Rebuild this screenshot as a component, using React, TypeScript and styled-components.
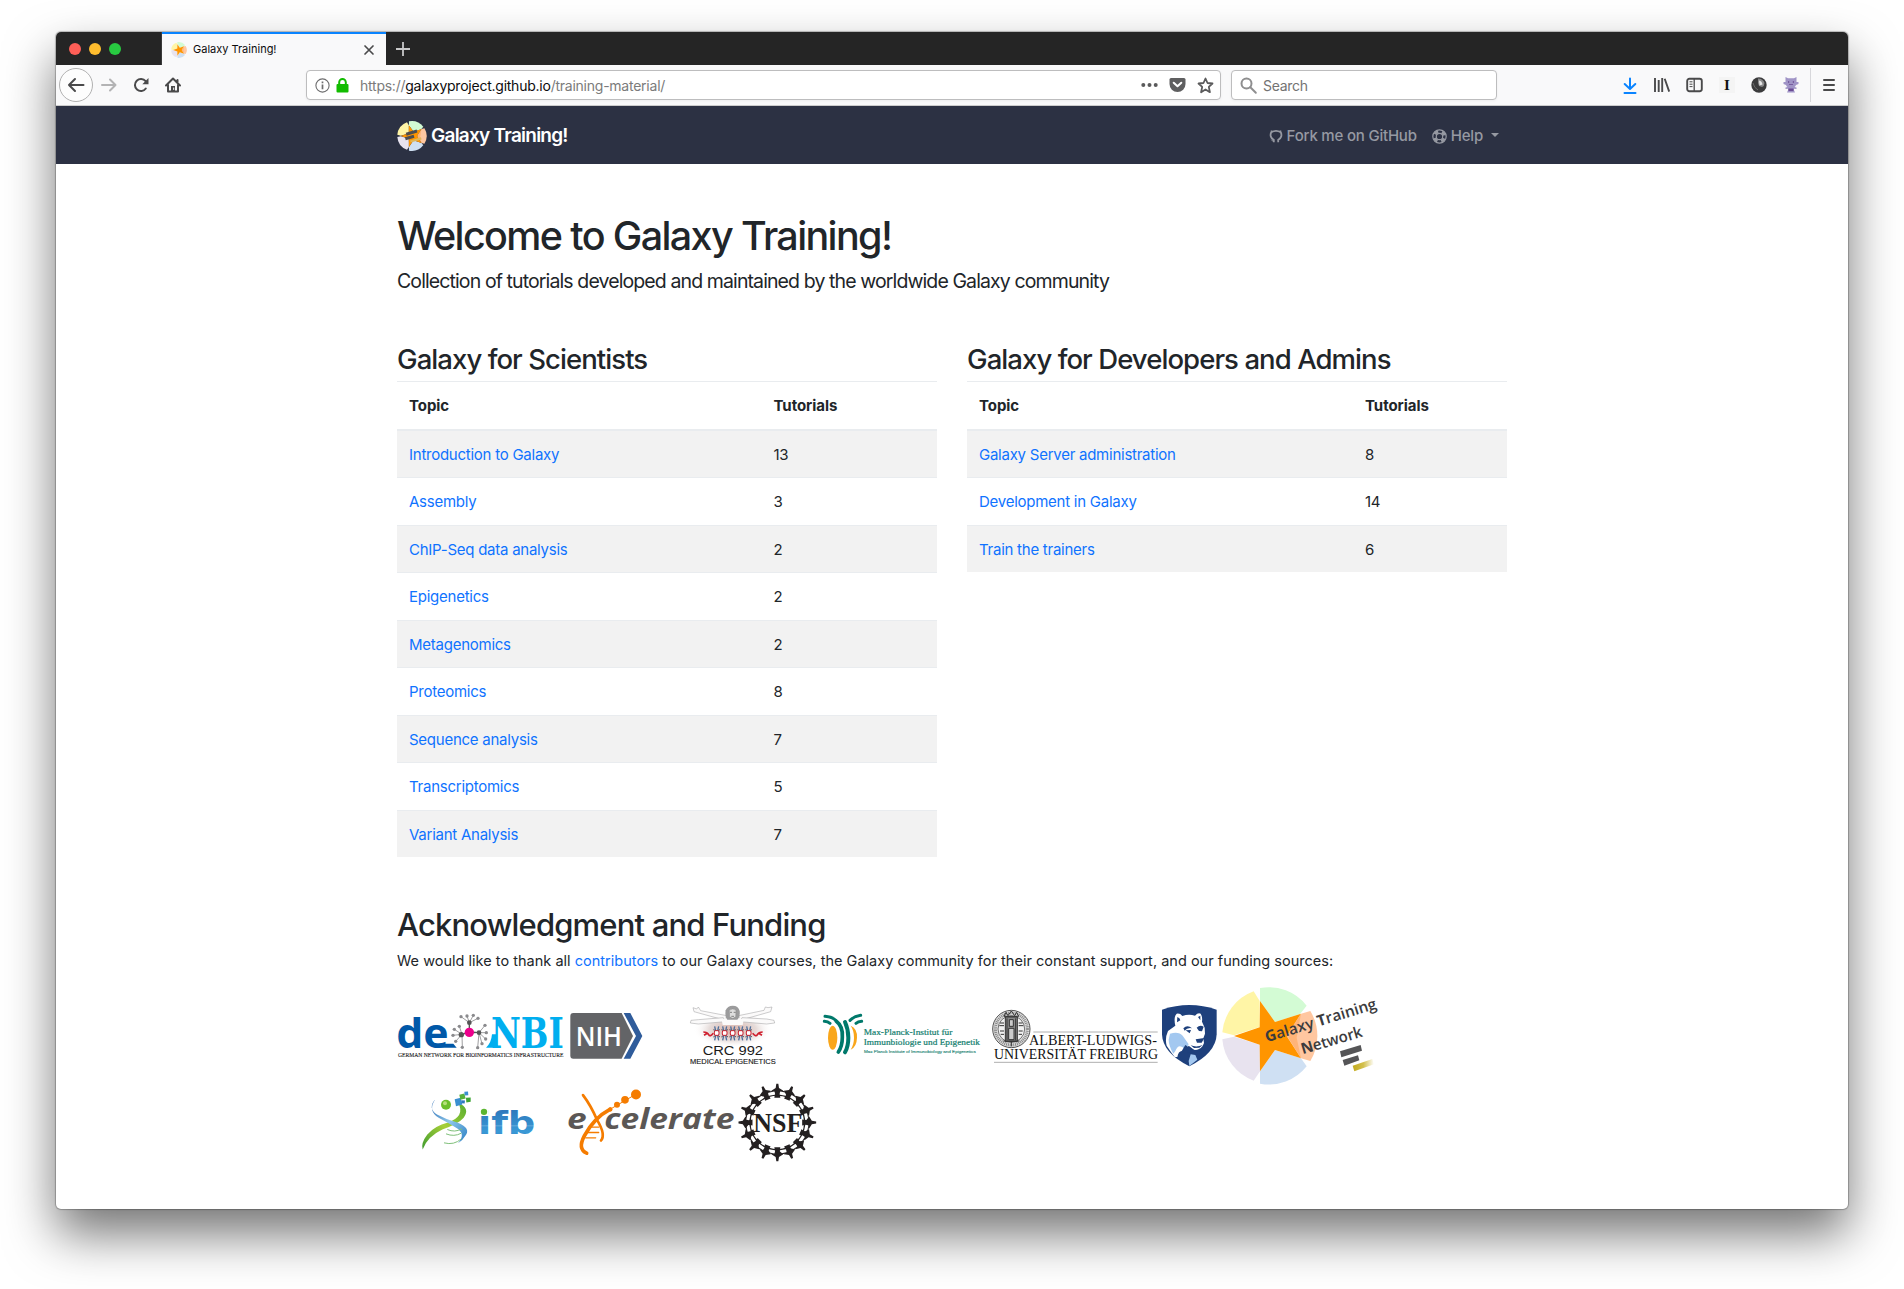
import React from "react";
import styled, { createGlobalStyle } from "styled-components";

const GlobalStyle = createGlobalStyle`
  *, *::before, *::after { box-sizing: border-box; }
  body {
    margin: 0;
    background: #fff;
    color: #212529;
    font-family: Inter, "Liberation Sans", sans-serif;
    font-size: 15px;
    line-height: 22.5px;
  }
  a { color: #0f73ff; text-decoration: none; }
  svg { display: block; flex: none; overflow: visible; }
`;

const Desktop = styled.div`
  height: 1289px;
  padding: 32px 56px 80px;
  overflow: hidden;
`;

const BrowserWindow = styled.div`
  height: 1177px;
  border-radius: 5px;
  background: #fff;
  overflow: hidden;
  box-shadow: 0 0 1px 1px rgba(0, 0, 0, 0.25), 0 25px 50px rgba(0, 0, 0, 0.55);
`;

/* ---------- browser chrome ---------- */

const TabStrip = styled.div`
  display: flex;
  height: 33px;
  background: #252525;
`;

const TrafficLights = styled.div`
  display: flex;
  align-items: center;
  gap: 8px;
  width: 106px;
  padding: 1px 0 0 13px;
  border-right: 1px solid #3a3a3a;
`;

const Light = styled.span<{ $color: string }>`
  width: 12px;
  height: 12px;
  border-radius: 50%;
  background: ${(p) => p.$color};
`;

const Tab = styled.div`
  display: flex;
  align-items: center;
  width: 224px;
  padding: 0 12px 0 9px;
  border-top: 2px solid #0a84ff;
  background: #f9f9fa;
  color: #0c0c0d;
  font-size: 11px;
`;

const TabTitle = styled.span`
  flex: 1;
  margin-left: 6px;
`;

const NewTab = styled.div`
  display: flex;
  align-items: center;
  padding-left: 10px;
`;

const Toolbar = styled.div`
  display: flex;
  align-items: center;
  height: 41px;
  padding: 0 12px 0 3px;
  border-bottom: 1px solid #ccc;
  background: #f9f9fa;
`;

const BackButton = styled.span`
  display: grid;
  place-items: center;
  width: 34px;
  height: 34px;
  border: 1px solid #b1b1b1;
  border-radius: 50%;
  background: #fdfdfd;
`;

const NavButtons = styled.div`
  display: flex;
  align-items: center;
  gap: 16px;
  width: 213px;
  margin-left: 8px;
`;

const Field = styled.div<{ $width: number }>`
  display: flex;
  align-items: center;
  width: ${(p) => p.$width}px;
  height: 30px;
  border: 1px solid #bdbdbe;
  border-radius: 4px;
  background: #fff;
  box-shadow: 0 1px 3px rgba(0, 0, 0, 0.05);
`;

const UrlField = styled(Field)`
  margin-left: -8px;
  padding: 0 6px 0 8px;
`;

const SearchField = styled(Field)`
  margin-left: 10px;
  padding-left: 8px;
  color: #737373;
  font-size: 14px;
`;

const SearchLabel = styled.span`
  margin: 2px 0 0 6px;
  letter-spacing: -0.3px;
`;

const Url = styled.span`
  flex: 1;
  margin: 2px 0 0 11px;
  color: #7b7b7b;
  font-size: 14px;
  letter-spacing: -0.24px;
`;

const Host = styled.span`
  color: #0c0c0d;
`;

const LockSlot = styled.span`
  margin-left: 6px;
`;

const FieldIcons = styled.div`
  display: flex;
  gap: 11px;
`;

const Tools = styled.div`
  display: flex;
  align-items: center;
  gap: 16px;
  margin-left: auto;
`;

const Divider = styled.span`
  width: 1px;
  height: 34px;
  margin: 0 -5px 0 -5px;
  background: #d7d7db;
`;

const InstapaperMark = styled.span`
  width: 16px;
  color: #111;
  background: #f4f4f4;
  font: bold 15px/16px "Liberation Serif", serif;
  text-align: center;
`;

/* ---------- web page ---------- */

const NavBar = styled.header`
  height: 58px;
  background: #2c3143;
`;

const Container = styled.div`
  width: 1140px;
  margin: 0 auto;
  padding: 0 15px;
`;

const NavInner = styled(Container)`
  display: flex;
  align-items: center;
  height: 58px;
  padding-top: 2px;
`;

const Brand = styled.div`
  display: flex;
  align-items: center;
  gap: 4px;
  margin-right: auto;
  color: #fff;
  font-size: 19px;
  font-weight: 600;
  letter-spacing: -0.75px;
`;

const NavLink = styled.a`
  display: flex;
  align-items: center;
  gap: 4px;
  margin-left: 15px;
  color: #9699a2;
  font-size: 15px;
  font-weight: 500;
  letter-spacing: -0.2px;
`;

const Caret = styled.span`
  margin: 0 8px 2px 4px;
  border: 4px solid transparent;
  border-top-color: #9699a2;
  border-bottom: 0;
`;

const Title = styled.h1`
  margin: 48px 0 0;
  font-size: 39.5px;
  font-weight: 500;
  line-height: 48px;
  letter-spacing: -1.63px;
`;

const Lead = styled.p`
  margin: 6px 0 47px;
  font-size: 19.5px;
  font-weight: 400;
  line-height: 30px;
  letter-spacing: -0.89px;
`;

const Columns = styled.div`
  display: grid;
  grid-template-columns: 540px 540px;
  align-items: start;
  gap: 30px;
`;

const SectionTitle = styled.h2`
  margin: 0 0 5px;
  font-size: 27.5px;
  font-weight: 500;
  line-height: 33px;
  letter-spacing: -0.93px;
`;

const TopicTable = styled.table<{ $first: number }>`
  width: 540px;
  table-layout: fixed;
  border-collapse: separate;
  border-spacing: 0;

  th, td {
    padding: 13px 12px 11px;
    border-top: 1px solid #e9ecef;
    text-align: left;
  }
  th {
    padding-bottom: 11.5px;
    border-bottom: 2px solid #e9ecef;
    font-weight: 700;
    letter-spacing: -0.05px;
  }
  th:first-child { width: ${(p) => p.$first}px; }
  td { letter-spacing: -0.25px; }
  tbody tr:first-child td { border-top: 0; padding-top: 12.5px; }
  tbody tr:nth-child(odd) { background: #f2f2f2; }
`;

const AckTitle = styled.h2`
  margin: 48.5px 0 6px;
  font-size: 31px;
  font-weight: 500;
  line-height: 38px;
  letter-spacing: -0.83px;
`;

const AckText = styled.p`
  margin: 0 0 16px;
  font-size: 14.5px;
  line-height: 22px;
  letter-spacing: 0.015px;
`;

const LogoRow = styled.div<{ $height: number }>`
  display: flex;
  align-items: center;
  height: ${(p) => p.$height}px;
`;

const LogoSlot = styled.span<{ $gap: number }>`
  margin-left: ${(p) => p.$gap}px;
`;

/* ---------- icons ---------- */

const Wheel = ({ size, bars = false }: { size: number; bars?: boolean }) => (
  <svg width={size} height={size} viewBox="214 49 292 292">
    <WheelArt />
    {bars && (
      <g transform="rotate(-16 350 195)">
        <rect x="310" y="150" width="110" height="30" fill="#4d4d4f" />
        <rect x="290" y="190" width="88" height="30" fill="#4d4d4f" />
        <rect x="330" y="234" width="110" height="22" fill="#e0b75a" />
      </g>
    )}
  </svg>
);

const WheelArt = () => (
  <>
    <path d="M330 51A144 144 0 0 1 470 104L450 129L375 153L330 90Z" fill="#d3fbd4" />
    <path d="M481 120A144 144 0 0 1 481 270L453 262L410 195L453 128Z" fill="#ffc7a0" />
    <path d="M470 286A144 144 0 0 1 330 338V301L375 237L453 262Z" fill="#cfe0f3" />
    <path d="M311 329A144 144 0 0 1 217 205L252 197L329 221L330 301Z" fill="#e8e3ef" />
    <path d="M217 184A144 144 0 0 1 311 61L329 90V168L252 193Z" fill="#fff5a6" />
    <path d="M330 90L375 153L453 128L410 195L453 262L375 237L330 301L329 221L252 195L329 169Z" fill="#ff9500" />
    <path d="M453 128L418 182L415 200L453 262L440 200Z" fill="#ffad66" opacity=".7" />
  </>
);

const BackIcon = () => (
  <svg width="18" height="16" viewBox="0 0 18 16" fill="none" stroke="#4a4a4b" strokeWidth="2" strokeLinecap="round" strokeLinejoin="round">
    <path d="M16.500 8H2M8 2L2 8l6 6" />
  </svg>
);
const ForwardIcon = () => (
  <svg width="16" height="16" viewBox="0 0 16 16" fill="none" stroke="#b3b3b4" strokeWidth="2" strokeLinecap="round" strokeLinejoin="round">
    <path d="M1 8h13.500M9 2.500L14.500 8 9 13.500" />
  </svg>
);
const ReloadIcon = () => (
  <svg width="16" height="16" viewBox="0 0 16 16" fill="none" stroke="#4a4a4b" strokeWidth="2">
    <path d="M12.800 11.500A6 6 0 1 1 12.600 4.200" strokeLinecap="round" />
    <path d="M15.500 1v6.200H9.300Z" fill="#4a4a4b" stroke="none" />
  </svg>
);
const HomeIcon = () => (
  <svg width="16" height="16" viewBox="0 0 16 16" fill="none" stroke="#4a4a4b" strokeWidth="2" strokeLinejoin="round" strokeLinecap="round">
    <path d="M1 8.500L8 1.500l7 7M3 8v6.500h10V8M12.500 3v2" />
    <path d="M6 9h4v5.500H6z" fill="#4a4a4b" stroke="none" />
    <path d="M8.700 11v1.500" stroke="#fff" strokeWidth="1" />
  </svg>
);
const InfoIcon = () => (
  <svg width="15" height="15" viewBox="0 0 15 15" fill="none" stroke="#6d6d6e" strokeWidth="1.100">
    <circle cx="7.500" cy="7.500" r="6.600" />
    <path d="M7.500 6.400v4.800" strokeWidth="1.700" />
    <path d="M7.500 3.500v1.700" strokeWidth="1.700" />
  </svg>
);
const LockIcon = () => (
  <svg width="13" height="15" viewBox="0 0 13 15">
    <path d="M3.200 7V4.300a3.300 3.300 0 0 1 6.600 0V7" fill="none" stroke="#12bc00" strokeWidth="2" />
    <rect x="0.500" y="6" width="12" height="8.500" rx="1" fill="#12bc00" />
  </svg>
);
const DotsIcon = () => (
  <svg width="17" height="16" viewBox="0 0 17 16" fill="#5a5a5b">
    <circle cx="2.300" cy="8" r="2" /><circle cx="8.500" cy="8" r="2" /><circle cx="14.700" cy="8" r="2" />
  </svg>
);
const PocketIcon = () => (
  <svg width="17" height="16" viewBox="0 0 17 16">
    <path d="M2 1h13q1.500 0 1.500 1.500V7a8 8 0 0 1-16 0V2.500Q.500 1 2 1z" fill="#5f5f60" />
    <path d="M4.700 5.700l3.800 3.600 3.800-3.600" fill="none" stroke="#fff" strokeWidth="2" strokeLinecap="round" strokeLinejoin="round" />
  </svg>
);
const StarIcon = () => (
  <svg width="17" height="17" viewBox="0 0 17 17" fill="none" stroke="#5a5a5b" strokeWidth="1.800" strokeLinejoin="round">
    <path d="M8.500 1.500l2 4.500 5 .5-3.700 3.400 1.100 5.300-4.400-2.700-4.400 2.700 1.100-5.300L1.500 6.500l5-.5z" />
  </svg>
);
const MagnifierIcon = () => (
  <svg width="17" height="17" viewBox="0 0 17 17" fill="none" stroke="#8e8e8f" strokeWidth="2" strokeLinecap="round">
    <circle cx="6.500" cy="6.500" r="5" /><path d="M10.300 10.300l5.500 5.400" />
  </svg>
);
const DownloadIcon = () => (
  <svg width="16" height="17" viewBox="0 0 16 17" fill="none" stroke="#0a84ff" strokeWidth="2" strokeLinecap="round" strokeLinejoin="round">
    <path d="M8 1.500v10M2.700 7L8 12l5.300-5M2.500 16h11" />
  </svg>
);
const LibraryIcon = () => (
  <svg width="16" height="16" viewBox="0 0 16 16" fill="none" stroke="#4a4a4b" strokeWidth="1.900">
    <path d="M1 1v14M4.700 3v12M8.200 1v14M10.700 1.800L15.200 14.600" />
  </svg>
);
const SidebarIcon = () => (
  <svg width="17" height="16" viewBox="0 0 17 16" fill="none" stroke="#4a4a4b" strokeWidth="1.900">
    <rect x="1.200" y="1.700" width="14.600" height="12.600" rx="2.200" />
    <path d="M8.200 2v12" strokeWidth="1.300" />
    <path d="M3.500 4.800h3M3.500 7.200h3M3.500 9.600h3" strokeWidth="1" />
  </svg>
);
const GlobeIcon = () => (
  <svg width="16" height="16" viewBox="0 0 16 16">
    <circle cx="8" cy="8" r="7.700" fill="#3b3b3c" />
    <path d="M7 1.500q5 0 6.500 4.500 0 3-2.500 4L8 9 7 6z" fill="#8a8a8b" />
    <path d="M8 3.500q3 .5 3.500 4l-3 1z" fill="#e8e8e8" />
    <path d="M2 6q1 5 5 7" stroke="#6b6b6c" fill="none" />
  </svg>
);
const CreatureIcon = () => (
  <svg width="16" height="16" viewBox="0 0 16 16" fill="#a094c6">
    <path d="M2.500 0L5 1.300h6L13.500 0v5h2v2L13 8q-.5 1.400-1.500 2l2 .5v1.500l-2.500-.3v1.500l1 2.300H4l1-2.300v-1.500l-2.500.3v-1.500l2-.5Q3.500 9.400 3 8L.500 7V5h2z" />
    <path d="M5 4.200h1.200v1.500H5zM9.800 4.200H11v1.500H9.800zM5.500 11.500h5V14h-5zM6 7.300h4v.8H6z" fill="#6a4b93" />
  </svg>
);
const MenuIcon = () => (
  <svg width="14" height="14" viewBox="0 0 14 14" stroke="#4a4a4b" strokeWidth="2" strokeLinecap="round">
    <path d="M2 2h10M2 7h10M2 12h10" />
  </svg>
);
const CloseIcon = () => (
  <svg width="10" height="10" viewBox="0 0 10 10" stroke="#4a4a4b" strokeWidth="1.700" strokeLinecap="round">
    <path d="M1 1l8 8M9 1L1 9" />
  </svg>
);
const PlusIcon = () => (
  <svg width="14" height="14" viewBox="0 0 14 14" stroke="#c9c9ca" strokeWidth="1.800">
    <path d="M7 0v14M0 7h14" />
  </svg>
);
const GitHubIcon = () => (
  <svg width="14" height="14" viewBox="0 0 14 14" fill="none" stroke="#9699a2" strokeWidth="1.800">
    <path d="M4.800 13.200v-2.400A5.300 5.300 0 0 1 2.300 3.300Q7 .4 11.700 3.300A5.300 5.300 0 0 1 9.200 10.800V13.200" strokeLinejoin="round" />
    <path d="M1.800 1.300l2.500.7-2.500 2zM12.200 1.300l-2.500.7 2.500 2z" fill="#9699a2" stroke="none" />
    <path d="M5 12q-1.800.4-2.700-1.300" strokeWidth="1" />
  </svg>
);
const LifeRingIcon = () => (
  <svg width="15" height="15" viewBox="0 0 15 15" fill="none" stroke="#9699a2">
    <circle cx="7.500" cy="7.500" r="6.700" strokeWidth="1.200" />
    <circle cx="7.500" cy="7.500" r="3.200" strokeWidth="1.200" />
    <circle cx="7.500" cy="7.500" r="5" strokeWidth="3" strokeDasharray="3.927 3.927" strokeDashoffset="-1.960" />
  </svg>
);

/* ---------- sponsor logos ---------- */

const molecule: [number, number, number, number][] = [
  [238, 125, 213, 107], [238, 125, 231, 105], [238, 125, 250, 103], [238, 125, 264, 112],
  [216, 160, 193, 145], [216, 160, 189, 163], [216, 160, 197, 181], [216, 160, 217, 199], [216, 160, 208, 136],
  [267, 155, 285, 133], [267, 155, 289, 155], [267, 155, 287, 174], [267, 155, 263, 200], [267, 155, 276, 188],
];

const DeNbiLogo = () => (
  <svg width="168" height="48" viewBox="21 93 504 144">
    <g fontWeight="bold">
      <text x="19" y="200" fontFamily="Noto Sans" fontSize="123" fill="#0058a8" textLength="157" lengthAdjust="spacingAndGlyphs">de</text>
      <path d="M140 188Q165 188 190 188L200 200H140Z" fill="#0058a8" />
      <text x="303" y="200" fontFamily="DejaVu Serif" fontSize="128" fill="#00aeef" textLength="218" lengthAdjust="spacingAndGlyphs">NBI</text>
    </g>
    <path d="M288 200Q304 186 306 160L318 160V200Z" fill="#00aeef" />
    <g stroke="#8a8a8d" strokeWidth="2.500">
      {molecule.map(([a, b, c, d], i) => <line key={i} x1={a} y1={b} x2={c} y2={d} />)}
      <path d="M238 125V153M216 160L238 153L267 155" stroke="#555" strokeWidth="4" />
    </g>
    {molecule.map(([, , c, d], i) => <circle key={i} cx={c} cy={d} r="5" fill="#8a8a8d" />)}
    <circle cx="238" cy="125" r="7" fill="#555" /><circle cx="214" cy="161" r="8" fill="#555" /><circle cx="267" cy="155" r="7" fill="#555" />
    <circle cx="238" cy="154" r="14" fill="#ec008c" />
    <text x="24" y="229" fontFamily="Liberation Serif" fontSize="19" fill="#222" stroke="#222" strokeWidth=".4" textLength="496" lengthAdjust="spacingAndGlyphs">GERMAN NETWORK FOR BIOINFORMATICS INFRASTRUCTURE</text>
  </svg>
);

const NihLogo = () => (
  <svg width="73" height="48" viewBox="540 93 219 144">
    <path d="M550 96H695L729 165L695 233H550Q541 233 541 224V105Q541 96 550 96Z" fill="#636467" />
    <path d="M701 96H721L757 165L721 233H701L738 165Z" fill="#2f5c9b" />
    <text x="557" y="194" fontFamily="Open Sans" fontWeight="600" fontSize="80" fill="#fff" textLength="139" lengthAdjust="spacingAndGlyphs">NIH</text>
  </svg>
);

const chromosomes = [980, 1004, 1028, 1052, 1076];

const CrcLogo = () => (
  <svg width="90" height="64" viewBox="894 69 270 192">
    <defs>
      <radialGradient id="crcGlow">
        <stop offset="0" stopColor="#d8aea5" /><stop offset=".6" stopColor="#e6dcda" /><stop offset="1" stopColor="#fff" stopOpacity="0" />
      </radialGradient>
    </defs>
    <ellipse cx="1028" cy="146" rx="118" ry="54" fill="url(#crcGlow)" />
    <g fill="#fbfafa" stroke="#9a9b9d" strokeWidth="1.500">
      <path d="M1006 118L912 92L909 80L920 84L925 78L932 89L1010 104Z" />
      <path d="M1050 118L1142 92L1146 78L1134 80L1126 78L1122 88L1046 104Z" />
      <path d="M1006 122L925 129L901 126L903 118L925 116L1000 110Z" />
      <path d="M1050 122L1130 129L1154 126L1152 118L1130 114L1056 110Z" />
      <path d="M995 116Q1028 98 1061 116L1058 132H998Z" stroke="none" />
    </g>
    <path d="M1012 116Q1004 108 1007 88Q1012 74 1028 74Q1045 74 1049 90Q1051 108 1042 116Z" fill="#9b9b9c" />
    <path d="M1018 88Q1028 80 1038 88L1037 106Q1028 118 1019 106Z" fill="#dedede" stroke="#777" />
    <path d="M1020 94h6M1031 94h6M1024 106h8" stroke="#555" strokeWidth="2" />
    <path d="M940 153q12 0 16 8t14-4M1118 153q-12 0-16 8t-14-4M942 163l10-6M1116 163l-10-6" fill="none" stroke="#cf202f" strokeWidth="5" />
    {chromosomes.map((x) => (
      <g key={x} fill="none">
        <path d={`M${x - 6} 136q6 20 0 42M${x + 6} 136q-6 20 0 42`} stroke="#4d6f9c" strokeWidth="4" />
        <path d={`M${x - 10} 146q10 8 20 0M${x - 10} 168q10-10 20 0`} stroke="#4a3a46" strokeWidth="2.500" />
        <rect x={x - 7} y="149" width="14" height="14" rx="4" fill="#fff" stroke="#cf202f" strokeWidth="3" />
      </g>
    ))}
    <g fontFamily="Liberation Sans" fill="#1a1a1a">
      <text x="938" y="221" fontSize="40" textLength="181" lengthAdjust="spacingAndGlyphs">CRC 992</text>
      <text x="900" y="249" fontSize="21" stroke="#1a1a1a" strokeWidth=".4" textLength="257" lengthAdjust="spacingAndGlyphs">MEDICAL EPIGENETICS</text>
    </g>
  </svg>
);

const MaxPlanckLogo = () => (
  <svg width="160" height="48" viewBox="126 93 480 144">
    <ellipse cx="158" cy="170" rx="14" ry="36" fill="#f9a61a" />
    <path d="M212 134Q232 142 231 170Q230 198 212 206Q222 190 222 170Q222 148 212 134Z" fill="#f9a61a" />
    <g fill="none" stroke="#00796b" strokeWidth="9" strokeLinecap="round">
      <path d="M135 106Q158 108 167 118M133 121Q144 122 150 127" />
      <path d="M169 121Q189 136 187 168Q187 196 175 213" strokeWidth="11" />
      <path d="M195 123Q205 145 205 170Q205 196 195 214" strokeWidth="12" />
      <path d="M242 103Q222 106 210 118M245 121Q234 122 228 127" />
    </g>
    <g fill="#14806f">
      <g fontFamily="Liberation Serif" fontSize="25" stroke="#14806f" strokeWidth=".6">
        <text x="251" y="163" textLength="266" lengthAdjust="spacingAndGlyphs">Max-Planck-Institut für</text>
        <text x="251" y="192" textLength="349" lengthAdjust="spacingAndGlyphs">Immunbiologie und Epigenetik</text>
      </g>
      <text x="252" y="215" fontFamily="Liberation Sans" fontSize="12" stroke="#14806f" strokeWidth=".3" textLength="335" lengthAdjust="spacingAndGlyphs">Max Planck Institute of Immunobiology and Epigenetics</text>
    </g>
  </svg>
);

const FreiburgLogo = () => (
  <svg width="167" height="56" viewBox="636 81 501 168">
    <g fill="none" stroke="#333">
      <circle cx="694" cy="144" r="56" strokeWidth="2.500" fill="#e2e2e2" />
      <circle cx="694" cy="144" r="48" strokeWidth="9" stroke="#888" strokeDasharray="3 2.500" />
      <circle cx="694" cy="144" r="40" strokeWidth="2" fill="#f1f1f1" />
      <path d="M676 108H712V182H676Z" fill="#888" strokeWidth="3" />
      <path d="M672 106l6-12 6 10 10-14 10 14 6-10 6 12zM670 180h48M681 112v66M707 112v66" strokeWidth="3" />
      <path d="M688 116h12v20h-12zM686 142h16v34h-16z" fill="#ccc" strokeWidth="3" />
      <path d="M660 126h12M658 134h14M660 150h12M716 126h12M716 134h14M716 150h12M662 160h10M716 160h10M694 182v14" strokeWidth="3" />
    </g>
    <path d="M760 153H1133M642 244H1133" stroke="#888" strokeWidth="2" />
    <g fontFamily="Liberation Serif" fontSize="43" fill="#111">
      <text x="747" y="193" textLength="384" lengthAdjust="spacingAndGlyphs">ALBERT-LUDWIGS-</text>
      <text x="642" y="235" textLength="492" lengthAdjust="spacingAndGlyphs">UNIVERSITÄT FREIBURG</text>
    </g>
  </svg>
);

const PennStateLogo = () => (
  <svg width="57" height="64" viewBox="1143 69 171 192">
    <path d="M1146 86Q1228 58 1310 86V160Q1308 216 1228 256Q1148 216 1146 160Z" fill="#1e407c" />
    <path d="M1186 134Q1180 108 1190 98Q1200 96 1207 105Q1226 98 1245 104Q1254 94 1262 98Q1268 108 1266 122L1274 140L1275 158L1270 172L1272 186Q1266 206 1244 208L1226 194L1214 212Q1196 204 1192 228L1184 228Q1172 212 1160 194Q1154 172 1164 150Z" fill="#fff" />
    <path d="M1170 158Q1196 150 1208 164L1226 190L1216 206Q1196 184 1186 210L1180 218Q1166 194 1166 176ZM1246 222L1252 236L1228 255L1226 240L1232 220Z" fill="#a3c8f0" />
    <path d="M1210 142Q1222 130 1236 142Q1222 139 1214 149ZM1217 148L1233 147L1229 157ZM1250 140Q1260 130 1271 137L1266 151L1257 150ZM1192 108Q1200 110 1201 118L1191 124ZM1254 108L1261 104V118ZM1247 175L1273 171L1265 185L1251 185ZM1232 193Q1250 200 1268 192L1258 200L1242 201ZM1216 192L1238 206L1262 208Q1244 220 1226 213L1204 236L1198 222Z" fill="#1e407c" />
  </svg>
);

const GtnLogo = () => (
  <svg width="160" height="98" viewBox="213 48 480 294">
    <defs>
      <linearGradient id="gtnBar"><stop offset="0" stopColor="#c3ab1c" /><stop offset=".5" stopColor="#d3c04d" /><stop offset="1" stopColor="#fff" /></linearGradient>
    </defs>
    <WheelArt />
    <g fontFamily="Open Sans" fontSize="46" fontWeight="600" fill="#3b3b3d">
      <text x="350" y="214" transform="rotate(-17 350 214)" textLength="348" lengthAdjust="spacingAndGlyphs">
        <tspan fontWeight="bold">G</tspan>alaxy <tspan fontWeight="bold">T</tspan>raining
      </text>
      <text x="458" y="250" transform="rotate(-16.500 458 250)" textLength="190" lengthAdjust="spacingAndGlyphs">
        <tspan fontWeight="bold">N</tspan>etwork
      </text>
    </g>
    <path d="M570 241L632 222L636 239L574 259ZM578 267L624 253L628 268L583 284Z" fill="#555557" />
    <path d="M608 284L667 264L672 280L613 301Z" fill="url(#gtnBar)" />
  </svg>
);

const IfbLogo = () => (
  <svg width="114" height="64" viewBox="93 328.500 342 192">
    <defs>
      <linearGradient id="ifbStrand" x1="0" y1="1" x2="1" y2="0"><stop offset="0" stopColor="#3f9b2f" /><stop offset=".5" stopColor="#a6cf38" /><stop offset="1" stopColor="#56ad30" /></linearGradient>
      <linearGradient id="ifbBlue" x1="0" y1="0" x2="1" y2="1"><stop offset="0" stopColor="#2467b2" /><stop offset=".5" stopColor="#8fc7ea" /><stop offset="1" stopColor="#2a7fc4" /></linearGradient>
      <linearGradient id="ifbText" x1="0" y1="0" x2="0" y2="1"><stop offset="0" stopColor="#2b6fb5" /><stop offset=".75" stopColor="#3a9ad6" /><stop offset="1" stopColor="#2b6fb5" /></linearGradient>
    </defs>
    <path d="M205 367Q242 384 221 412Q206 430 157 447Q112 468 98 507Q92 488 112 462Q134 436 174 426Q226 408 205 367Z" fill="url(#ifbStrand)" />
    <path d="M136 356Q112 382 141 402Q170 418 204 427Q244 444 226 466Q220 478 204 488Q228 462 202 444Q176 428 146 412Q112 390 136 356Z" fill="url(#ifbBlue)" />
    <path d="M172 447q22 10 44-2M168 460q24 10 46-2M162 487q30 8 52-12" fill="none" stroke="#7fc07a" strokeWidth="3" />
    <circle cx="168" cy="373" r="15" fill="#6cbf2c" /><circle cx="165" cy="368" r="6" fill="#b5e07a" />
    <path d="M194 356l18-4 5 20-19 5z" fill="#3a8fd0" /><path d="M208 343l15-4 4 15-16 4z" fill="#55b13a" /><path d="M223 334l11-1 1 11-11 1z" fill="#3a8fd0" /><path d="M228 352l14-1v13l-13 2z" fill="#3fa535" /><path d="M214 359l11 1-1 9-10-1z" fill="#2f79bf" />
    <text x="264" y="459" fontFamily="DejaVu Sans" fontWeight="bold" fontSize="96" fill="url(#ifbText)" textLength="172" lengthAdjust="spacingAndGlyphs">ifb</text>
    <rect x="266" y="382" width="30" height="22" fill="#fff" />
    <circle cx="282" cy="394" r="9.500" fill="#5cb531" />
    <path d="M268 436H432" stroke="#fff" strokeWidth="1.500" opacity=".5" />
  </svg>
);

const ExcelerateLogo = () => (
  <svg width="168" height="66" viewBox="531 325.500 504 198">
    <g fontFamily="Open Sans" fontStyle="italic" fontWeight="700" fontSize="84" fill="#5b5755">
      <text x="531" y="444" textLength="59" lengthAdjust="spacingAndGlyphs">e</text>
      <text x="643" y="444" textLength="390" lengthAdjust="spacingAndGlyphs">celerate</text>
    </g>
    <g fill="none" stroke="#f57c00" strokeLinecap="round">
      <path d="M590 518Q562 506 583 466Q612 412 661 386" strokeWidth="11" />
      <path d="M579 344Q602 374 621 418Q648 462 633 480" strokeWidth="8" />
      <path d="M600 440h26M592 456h34M587 472h30" strokeWidth="4" />
      <path d="M661 386L738 341" strokeWidth="3" />
    </g>
    <g fill="#f57c00">
      <circle cx="738" cy="342" r="15" /><circle cx="705" cy="358" r="11.500" /><circle cx="681" cy="373" r="9" /><circle cx="661" cy="387" r="6.500" />
    </g>
  </svg>
);

const NsfLogo = () => (
  <svg width="79" height="79" viewBox="24 36 237 237">
    <circle cx="142" cy="154.500" r="88" fill="none" stroke="#231f20" strokeWidth="16" />
    {Array.from({ length: 16 }, (_, i) => (
      <g key={i} transform={`rotate(${i * 22.5} 142 154.500)`}>
        <path d="M139 38H145L147 51L160 59L149 68L151 80H133L135 68L124 59L137 51Z" fill="#231f20" />
        <rect x="132" y="61.500" width="20" height="9.500" rx="1.500" fill="#fff" transform="rotate(11.250 142 154.500)" />
      </g>
    ))}
    <text x="70" y="182" fontFamily="Liberation Serif" fontWeight="bold" fontSize="84" fill="#231f20" textLength="147" lengthAdjust="spacingAndGlyphs">NSF</text>
  </svg>
);

/* ---------- page assembly ---------- */

type Topic = [string, number];

const scientistTopics: Topic[] = [
  ["Introduction to Galaxy", 13],
  ["Assembly", 3],
  ["ChIP-Seq data analysis", 2],
  ["Epigenetics", 2],
  ["Metagenomics", 2],
  ["Proteomics", 8],
  ["Sequence analysis", 7],
  ["Transcriptomics", 5],
  ["Variant Analysis", 7],
];

const developerTopics: Topic[] = [
  ["Galaxy Server administration", 8],
  ["Development in Galaxy", 14],
  ["Train the trainers", 6],
];

const Topics = ({ title, rows, first }: { title: string; rows: Topic[]; first: number }) => (
  <section>
    <SectionTitle>{title}</SectionTitle>
    <TopicTable $first={first}>
      <thead>
        <tr><th>Topic</th><th>Tutorials</th></tr>
      </thead>
      <tbody>
        {rows.map(([name, count]) => (
          <tr key={name}><td><a>{name}</a></td><td>{count}</td></tr>
        ))}
      </tbody>
    </TopicTable>
  </section>
);

export default function App() {
  return (
    <>
      <GlobalStyle />
      <Desktop>
        <BrowserWindow>
          <TabStrip>
            <TrafficLights>
              <Light $color="#ff5f57" /><Light $color="#ffbd2e" /><Light $color="#28ca41" />
            </TrafficLights>
            <Tab>
              <Wheel size={16} />
              <TabTitle>Galaxy Training!</TabTitle>
              <CloseIcon />
            </Tab>
            <NewTab><PlusIcon /></NewTab>
          </TabStrip>
          <Toolbar>
            <BackButton><BackIcon /></BackButton>
            <NavButtons><ForwardIcon /><ReloadIcon /><HomeIcon /></NavButtons>
            <UrlField $width={915}>
              <InfoIcon />
              <LockSlot><LockIcon /></LockSlot>
              <Url>https://<Host>galaxyproject.github.io</Host>/training-material/</Url>
              <FieldIcons><DotsIcon /><PocketIcon /><StarIcon /></FieldIcons>
            </UrlField>
            <SearchField $width={266}>
              <MagnifierIcon />
              <SearchLabel>Search</SearchLabel>
            </SearchField>
            <Tools>
              <DownloadIcon /><LibraryIcon /><SidebarIcon />
              <InstapaperMark>I</InstapaperMark>
              <GlobeIcon /><CreatureIcon />
              <Divider />
              <MenuIcon />
            </Tools>
          </Toolbar>
          <NavBar>
            <NavInner>
              <Brand><Wheel size={30} bars />Galaxy Training!</Brand>
              <NavLink><GitHubIcon />Fork me on GitHub</NavLink>
              <NavLink><LifeRingIcon />Help<Caret /></NavLink>
            </NavInner>
          </NavBar>
          <Container>
            <Title>Welcome to Galaxy Training!</Title>
            <Lead>Collection of tutorials developed and maintained by the worldwide Galaxy community</Lead>
            <Columns>
              <Topics title="Galaxy for Scientists" rows={scientistTopics} first={364.5} />
              <Topics title="Galaxy for Developers and Admins" rows={developerTopics} first={386} />
            </Columns>
            <AckTitle>Acknowledgment and Funding</AckTitle>
            <AckText>
              We would like to thank all <a>contributors</a> to our Galaxy courses, the Galaxy community for their constant support, and our funding sources:
            </AckText>
            <LogoRow $height={96}>
              <DeNbiLogo />
              <LogoSlot $gap={5}><NihLogo /></LogoSlot>
              <LogoSlot $gap={45}><CrcLogo /></LogoSlot>
              <LogoSlot $gap={44}><MaxPlanckLogo /></LogoSlot>
              <LogoSlot $gap={10}><FreiburgLogo /></LogoSlot>
              <LogoSlot $gap={2}><PennStateLogo /></LogoSlot>
              <LogoSlot $gap={3}><GtnLogo /></LogoSlot>
            </LogoRow>
            <LogoRow $height={77}>
              <LogoSlot $gap={24}><IfbLogo /></LogoSlot>
              <LogoSlot $gap={32}><ExcelerateLogo /></LogoSlot>
              <LogoSlot $gap={3}><NsfLogo /></LogoSlot>
            </LogoRow>
          </Container>
        </BrowserWindow>
      </Desktop>
    </>
  );
}
